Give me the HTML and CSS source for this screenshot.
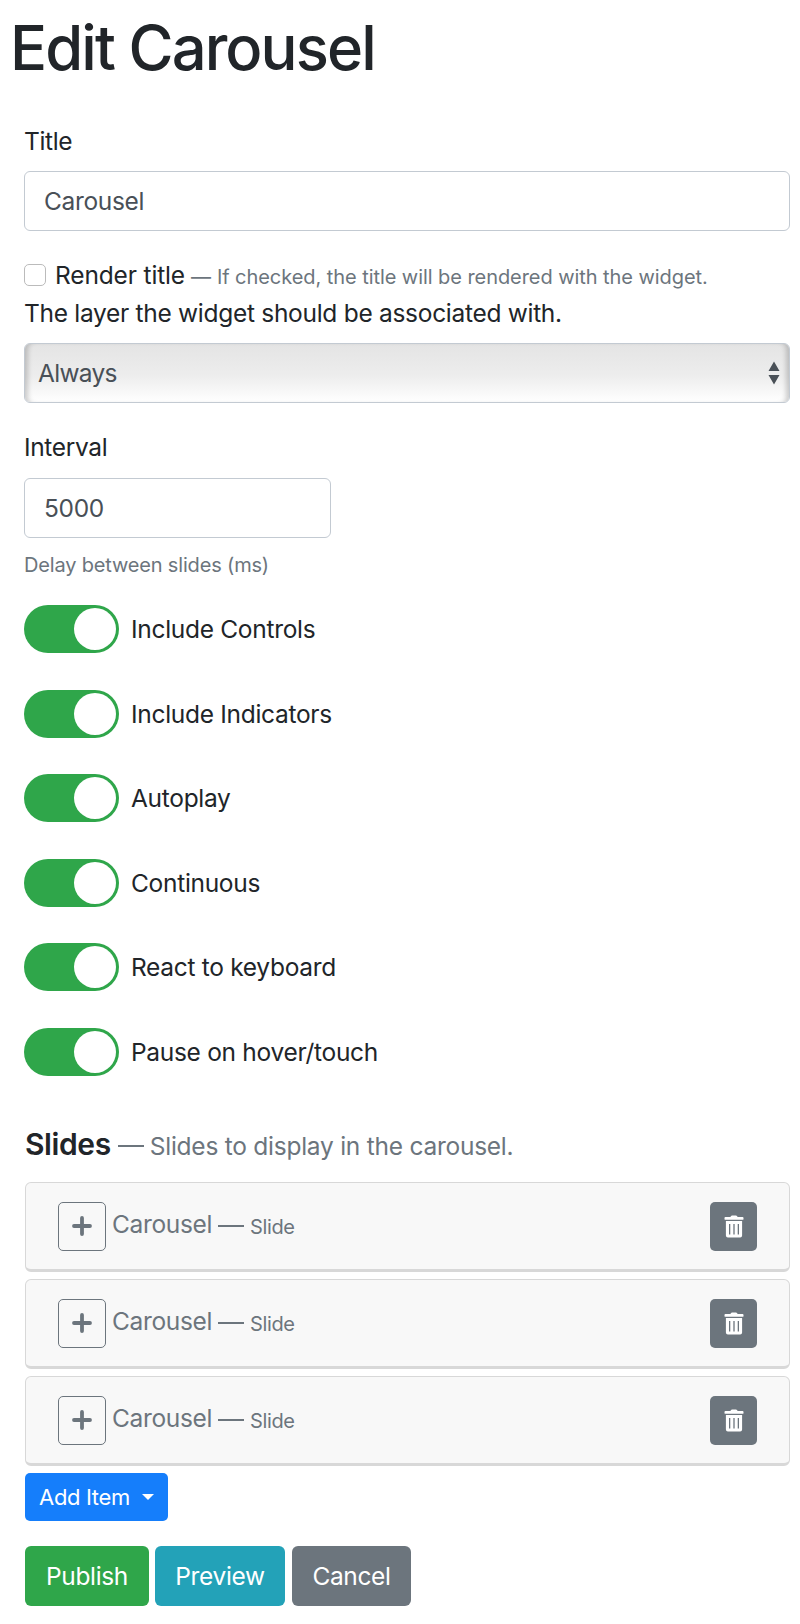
FILE: index.html
```
<!DOCTYPE html>
<html lang="en">
<head>
<meta charset="utf-8">
<title>Edit Carousel</title>
<link rel="stylesheet" href="styles.css">
</head>
<body>
<svg width="0" height="0" class="sprite" aria-hidden="true">
  <symbol id="plus" viewBox="0 0 20 20"><path d="M10 2v16M2 10h16" stroke="currentColor" stroke-width="3.8" stroke-linecap="round" fill="none"/></symbol>
  <symbol id="trash" viewBox="0 0 20 23"><path fill="currentColor" fill-rule="evenodd" d="M1.400 2H6.300L7.100 1q.3-.5.900-.5h4q.6 0 .900.500l.8 1h4.900q.9 0 .900.900v1q0 .9-.9.900H1.400q-.9 0-.9-.9v-1q0-.9.900-.9ZM1.900 6H18.100V20.500q0 2-2 2H3.900q-2 0-2-2ZM5 9V19.500H6.300V9ZM9.350 9V19.500H10.650V9ZM13.700 9V19.500H15V9Z"/></symbol>
</svg>
<h1 class="page-title">Edit Carousel</h1>
<form class="form">
  <label class="label">Title</label>
  <div class="input">Carousel</div>
  <div class="check-row"><span class="checkbox"></span><span class="check-label">Render title</span><span class="hint dash">—</span><span class="hint check-hint">If checked, the title will be rendered with the widget.</span></div>
  <label class="label layer">The layer the widget should be associated with.</label>
  <div class="select"><span>Always</span><svg class="arrows" width="12" height="24" viewBox="0 0 12 24"><path d="M6 .5 11.500 10H.5ZM.5 14h11L6 23.500Z" fill="#495057"/></svg></div>
  <label class="label interval">Interval</label>
  <div class="input short">5000</div>
  <div class="hint delay">Delay between slides (ms)</div>
  <div class="switches">
    <div class="switch-row"><span class="switch"></span><span>Include Controls</span></div>
    <div class="switch-row"><span class="switch"></span><span>Include Indicators</span></div>
    <div class="switch-row"><span class="switch"></span><span>Autoplay</span></div>
    <div class="switch-row"><span class="switch"></span><span>Continuous</span></div>
    <div class="switch-row"><span class="switch"></span><span>React to keyboard</span></div>
    <div class="switch-row"><span class="switch"></span><span>Pause on hover/touch</span></div>
  </div>
  <div class="slides-head"><h2 class="slides-title">Slides</h2><span class="rule"></span><span class="slides-hint">Slides to display in the carousel.</span></div>
  <div class="cards">
    <div class="card"><span class="icon-btn outline"><svg width="20" height="20"><use href="#plus"/></svg></span><span class="card-name">Carousel</span><span class="rule"></span><span class="card-kind">Slide</span><span class="icon-btn solid"><svg width="20" height="23"><use href="#trash"/></svg></span></div>
    <div class="card"><span class="icon-btn outline"><svg width="20" height="20"><use href="#plus"/></svg></span><span class="card-name">Carousel</span><span class="rule"></span><span class="card-kind">Slide</span><span class="icon-btn solid"><svg width="20" height="23"><use href="#trash"/></svg></span></div>
    <div class="card"><span class="icon-btn outline"><svg width="20" height="20"><use href="#plus"/></svg></span><span class="card-name">Carousel</span><span class="rule"></span><span class="card-kind">Slide</span><span class="icon-btn solid"><svg width="20" height="23"><use href="#trash"/></svg></span></div>
  </div>
  <div class="btn add"><span>Add Item</span><span class="caret"></span></div>
  <div class="actions"><span class="btn publish">Publish</span><span class="btn preview">Preview</span><span class="btn cancel">Cancel</span></div>
</form>
</body>
</html>
```
FILE: styles.css
```
* { box-sizing: border-box; }
body { margin: 0; padding: 18px 10px 0 24px; background: #fff; color: #212529; font-family: Inter, "Liberation Sans", sans-serif; font-size: 24.5px; font-weight: 430; line-height: 36px; letter-spacing: -0.35px; white-space: nowrap; }
.sprite { display: block; }
.page-title { margin: 0 0 45px -14px; font-size: 61.5px; line-height: 60px; font-weight: 530; letter-spacing: -1.9px; }
.label { display: block; }
.input { height: 60px; margin-top: 12px; padding: 0 19px; border: 1px solid #c3cad2; border-radius: 6px; line-height: 59px; color: #495057; }
.short { width: 307px; margin-top: 13px; }
.check-row { display: flex; align-items: center; height: 36px; margin-top: 26px; }
.checkbox { width: 22px; height: 22px; border: 1px solid #bbb; border-radius: 5px; }
.check-label { margin-left: 9px; letter-spacing: -0.15px; }
.hint { color: #6c757d; font-size: 20px; letter-spacing: -0.06px; }
.dash { margin: 3px 6px 0; }
.check-hint { margin-top: 3px; }
.layer { margin-top: 2px; letter-spacing: -0.29px; }
.select { display: flex; align-items: center; justify-content: space-between; height: 60px; margin-top: 12px; padding: 0 9px 0 13px; border: 1px solid #c3cad2; border-radius: 6px; background: linear-gradient(#e4e4e4, #ededed 55%, #fff); box-shadow: inset 6px 0 5px -3px rgba(0,0,0,.19), inset -6px 0 5px -3px rgba(0,0,0,.19); color: #495057; letter-spacing: -0.7px; }
.interval { margin-top: 26px; }
.delay { height: 30px; margin-top: 12px; line-height: 30px; letter-spacing: -0.17px; }
.switches { display: grid; grid-auto-rows: 48px; gap: 36.5px; margin-top: 25px; }
.switch-row { display: flex; align-items: center; gap: 12px; letter-spacing: -0.3px; }
.switch { display: flex; justify-content: flex-end; width: 95px; height: 48px; padding: 3px; border-radius: 24px; background: #2fa64a; }
.switch::after { content: ""; width: 42px; height: 42px; border-radius: 50%; background: #fff; }
.slides-head { display: flex; align-items: baseline; height: 36px; margin-top: 50px; padding-left: 1px; }
.slides-title { margin: 0; font-size: 30px; font-weight: 560; letter-spacing: -0.4px; }
.rule { width: 26px; height: 2px; margin: 0 6px 0 7px; background: #6c757d; align-self: center; }
.slides-head .rule { margin-top: 5px; }
.slides-hint { color: #6c757d; letter-spacing: -0.25px; }
.cards { display: grid; gap: 7px; margin: 20px 0 0 1px; }
.card { display: flex; align-items: center; height: 90px; padding: 0 32px; border: 1px solid #d8d8d8; border-bottom: 3px solid #d8d8d8; border-radius: 6px; background: #f8f8f8; color: #6c757d; }
.icon-btn { display: flex; align-items: center; justify-content: center; width: 48px; height: 49px; margin-top: 1px; border-radius: 5px; }
.outline { border: 1px solid #6c757d; margin-right: 6px; }
.solid { width: 47px; margin-left: auto; background: #6c757d; color: #fff; }
.card-name { margin-bottom: 3px; }
.card .rule { margin-left: 6px; }
.card-kind { margin-top: 2px; font-size: 20px; }
.btn { display: flex; align-items: center; justify-content: center; height: 60px; border-radius: 6px; color: #fff; }
.add { width: 143px; height: 48px; margin: 7px 0 0 1px; border-radius: 5px; background: #157efb; font-size: 22px; gap: 12px; }
.caret { border: 6px solid transparent; border-top-color: #fff; border-bottom: 0; }
.actions { display: flex; margin: 25px 0 0 1px; }
.publish { width: 124px; background: #2fa64a; margin-right: 6px; }
.preview { width: 130px; background: #23a2b8; margin-right: 7px; }
.cancel { width: 119px; background: #6c757d; }
```
